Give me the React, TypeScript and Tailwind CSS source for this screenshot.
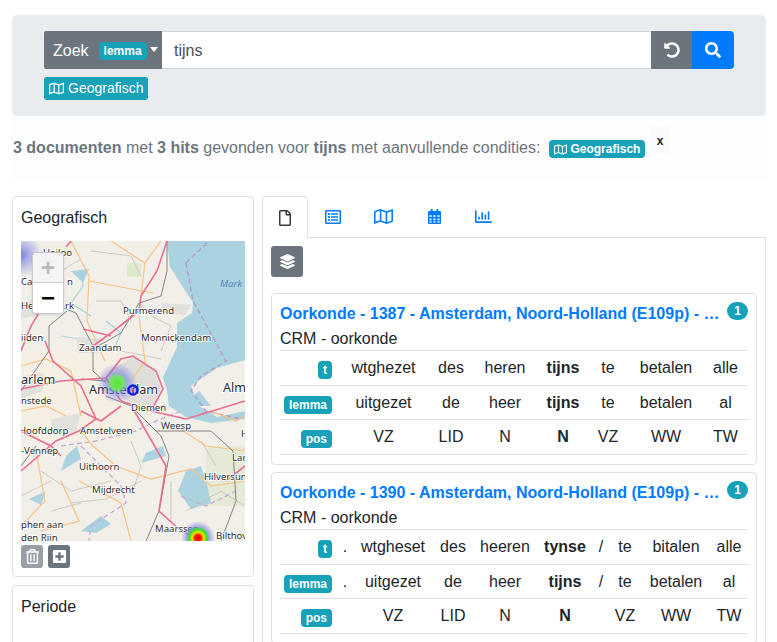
import React from 'react';
import {
  FaRegFile,
  FaRegListAlt,
  FaRegMap,
  FaRegChartBar,
  FaLayerGroup,
  FaUndoAlt,
  FaSearch,
  FaRegTrashAlt,
  FaPlusSquare,
} from 'react-icons/fa';

// =============================================================================
// KAART
// =============================================================================

const LABELS: [string, number, number][] = [
  ['Heiloo', 22, 15],
  ['Cas', 0, 44],
  ['n', 46, 44],
  ['Hee', 0, 68],
  ['rk', 44, 68],
  ['Purmerend', 102, 73],
  ['Monnickendam', 120, 100],
  ['iiden', 0, 100],
  ['Zaandam', 58, 110],
  ['nstede', 0, 163],
  ['Diemen', 110, 170],
  ['Hoofddorp', -2, 193],
  ['Amstelveen', 59, 193],
  ['Weesp', 140, 188],
  ['H', 220, 196],
  ['-Vennep', 0, 213],
  ['Lar', 211, 220],
  ['Uithoorn', 58, 229],
  ['Hilversum', 183, 239],
  ['Mijdrecht', 71, 252],
  ['phen aan', 0, 287],
  ['den Rijn', 0, 300],
  ['Maarssen', 134, 291],
  ['Bilthoven', 195, 298],
];

const PINK_ROADS = [
  'M146 0 L136 30 L120 55 L118 70 L90 92 L72 105',
  'M24 100 L32 120 L60 145 L75 178 L58 190 L35 200 L0 230',
  'M0 148 L40 140 L85 137 L100 118 L112 115 L135 130 L142 148 L130 170 L100 160 L85 137',
  'M130 170 L165 178 L224 160',
  'M112 168 L125 190 L145 225 L138 270 L160 290 L185 300',
  'M0 190 L30 205 L40 215',
  'M40 48 L24 62 L10 85 L0 110',
  'M205 240 L224 225',
  'M60 170 L80 180 L100 165',
  'M62 88 L90 95',
  'M50 0 L45 6',
];

const ORANGE_ROADS = [
  'M50 0 L68 35 L66 80 L84 120',
  'M90 0 L124 22 L118 70',
  'M124 22 L140 0',
  'M68 40 L100 46 L132 52',
  'M118 75 L124 120 L110 140',
  'M0 125 L25 118 L50 130 L60 175',
  'M60 190 L72 205 L95 225 L130 238 L170 228 L190 245 L224 240',
  'M15 210 L24 260 L0 285',
  'M40 240 L58 280 L20 290',
  'M58 240 L100 262 L110 300',
  'M190 170 L215 180 L224 175',
  'M155 185 L185 205 L224 210',
  'M0 170 L25 165 L45 175',
];

const GRAY_ROADS = [
  'M146 0 L146 30 L140 55 L118 62 L100 92 L72 108 L72 130 L85 142',
  'M30 62 L55 72 L72 105',
  'M0 150 L28 110 L28 85 L46 70',
  'M85 140 L60 138',
  'M85 155 L110 165 L140 195 L148 215 L138 270 L125 300',
  'M135 190 L190 190 L212 210 L215 260 L200 300',
  'M0 225 L15 205',
];

// dunne lijntjes voor het detail in het landschap
const MINOR_ROADS = [
  'M10 20 L40 30 L60 18',
  'M70 10 L110 15 L120 35',
  'M75 60 L100 60 L110 80',
  'M130 75 L150 85 L140 110',
  'M100 110 L140 118',
  'M20 230 L50 250 L90 240',
  'M50 262 L85 258 L120 240',
  'M110 200 L120 225 L112 250',
  'M150 240 L150 280',
  'M165 270 L200 250 L224 265',
  'M180 200 L195 225',
  'M0 255 L30 240',
  'M30 270 L60 262',
];

const LAKES = [
  'M40 230 L60 218 L56 205 L45 215 Z',
  'M120 222 L145 215 L142 205 L125 212 Z',
  'M157 250 L165 230 L180 225 L185 240 L190 262 L170 268 Z',
  'M8 258 L25 250 L20 264 Z',
  'M60 290 L80 275 L90 283 L75 292 Z',
  'M50 30 L68 28 L62 42 Z',
  'M160 165 L178 150 L190 165 Z',
];

function MapDrawing() {
  return (
    <svg viewBox="0 0 224 300" className="block w-full h-full">
      <defs>
        <radialGradient id="heat-mid">
          <stop offset="0%" stopColor="#4fe82a" />
          <stop offset="34%" stopColor="#6ee060" stopOpacity="0.9" />
          <stop offset="55%" stopColor="#6a78e8" stopOpacity="0.5" />
          <stop offset="100%" stopColor="#6a6ae8" stopOpacity="0" />
        </radialGradient>
        <radialGradient id="heat-hot">
          <stop offset="0%" stopColor="#f00000" />
          <stop offset="20%" stopColor="#ff2000" />
          <stop offset="34%" stopColor="#e8e800" />
          <stop offset="52%" stopColor="#30e030" />
          <stop offset="72%" stopColor="#8080e8" stopOpacity="0.55" />
          <stop offset="100%" stopColor="#8080e8" stopOpacity="0" />
        </radialGradient>
        <radialGradient id="heat-cold">
          <stop offset="0%" stopColor="#5060e0" stopOpacity="0.75" />
          <stop offset="100%" stopColor="#7070e0" stopOpacity="0" />
        </radialGradient>
      </defs>

      <rect width="224" height="300" fill="#f2efe9" />
      <rect x="0" y="110" width="110" height="90" fill="#f6efe4" />
      <rect x="185" y="205" width="39" height="60" fill="#e4ead6" />
      <rect x="106" y="22" width="14" height="14" fill="#dfe9cc" />

      <path
        d="M146 0 L224 0 L224 119 L196 127 L170 145 L178 165 L196 176 L224 170 L224 178 L190 182 L165 176 L148 165 L146 150 L142 136 L156 106 L156 82 L171 72 L172 62 L149 26 Z"
        fill="#aad3df"
      />
      {LAKES.map((d, i) => (
        <path key={i} d={d} fill="#aad3df" />
      ))}
      <path d="M60 30 L62 45 L50 62 L70 75 M85 80 L100 92 L92 110 M40 95 L70 100 M150 150 L170 150" fill="none" stroke="#aad3df" strokeWidth="1.2" />

      {/* bebouwing */}
      <path d="M88 130 L112 116 L134 130 L140 148 L130 168 L102 158 Z" fill="#e0ded9" />
      <path d="M0 135 L22 132 L22 150 L0 158 Z M30 178 L60 172 L54 193 L32 193 Z M0 62 L16 58 L18 74 L0 78 Z M140 62 L170 64 L164 74 L142 72 Z M55 96 L82 98 L78 112 L58 112 Z" fill="#e3e1dc" />

      {/* grenzen */}
      <path
        d="M165 22 L188 0 M165 22 L172 60 L205 120 L180 135 L170 150 L185 170 L220 178"
        fill="none"
        stroke="#b79ac8"
        strokeWidth="1.4"
        strokeDasharray="5 3"
      />
      <path
        d="M40 205 L75 200 L115 190 L135 180 L160 170 M60 205 L100 245 L105 262 L70 285 L68 300 M160 255 L185 265 L215 250"
        fill="none"
        stroke="#c8aed4"
        strokeWidth="1.4"
        strokeDasharray="5 3"
      />

      {MINOR_ROADS.map((d, i) => (
        <path key={i} d={d} fill="none" stroke="#bdbab4" strokeWidth="0.7" />
      ))}
      {ORANGE_ROADS.map((d, i) => (
        <path key={i} d={d} fill="none" stroke="#f8c384" strokeWidth="1.2" />
      ))}
      {GRAY_ROADS.map((d, i) => (
        <path key={i} d={d} fill="none" stroke="#777777" strokeWidth="0.9" />
      ))}
      {PINK_ROADS.map((d, i) => (
        <path key={i} d={d} fill="none" stroke="#e96e92" strokeWidth="1.6" />
      ))}

      <g fontFamily="'Noto Sans', 'Open Sans', sans-serif" fontSize="9.6" fill="#2c2c2c" stroke="#ffffff" strokeWidth="1.5" paintOrder="stroke">
        {LABELS.map(([text, x, y]) => (
          <text key={text} x={x} y={y}>
            {text}
          </text>
        ))}
        <text x="199" y="46" fontStyle="italic" fill="#5a85c0" strokeWidth="0">Mark</text>
      </g>
      <g fontFamily="'Noto Sans', 'Open Sans', sans-serif" fontSize="12.6" fill="#2c2c2c" stroke="#ffffff" strokeWidth="1.6" paintOrder="stroke">
        <text x="0" y="143">arlem</text>
        <text x="68" y="153">Amsterdam</text>
        <text x="202" y="151">Alm</text>
      </g>

      <circle cx="96" cy="142" r="20" fill="url(#heat-mid)" />
      <circle cx="0" cy="14" r="22" fill="url(#heat-cold)" />
      <circle cx="177" cy="297" r="17" fill="url(#heat-hot)" />
      <circle cx="112" cy="149" r="4.5" fill="#5050e8" fillOpacity="0.3" stroke="#1a1ae8" strokeWidth="2.5" />
    </svg>
  );
}

function CalendarIcon() {
  return (
    <svg viewBox="0 0 16 17" className="h-[16px] w-[15px]">
      <path d="M4 0 h2 v3 h-2 z M10 0 h2 v3 h-2 z" fill="currentColor" />
      <rect x="1" y="2" width="14" height="14" rx="1.5" fill="currentColor" />
      <g fill="#ffffff" fillOpacity="0.85">
        <rect x="2.5" y="6.5" width="2.5" height="2" />
        <rect x="6.7" y="6.5" width="2.5" height="2" />
        <rect x="11" y="6.5" width="2.5" height="2" />
        <rect x="2.5" y="10" width="2.5" height="2" />
        <rect x="6.7" y="10" width="2.5" height="2" />
        <rect x="11" y="10" width="2.5" height="2" />
        <rect x="2.5" y="13" width="2.5" height="1.6" />
        <rect x="6.7" y="13" width="2.5" height="1.6" />
        <rect x="11" y="13" width="2.5" height="1.6" />
      </g>
    </svg>
  );
}

// =============================================================================
// RESULTATEN
// =============================================================================

function Tag({ children }: { children: React.ReactNode }) {
  return (
    <span className="relative top-[2px] inline-block rounded-[4px] bg-[#17a2b8] px-[5px] pt-[4px] pb-[4px] text-[12px] leading-[10px] font-bold text-white align-middle">
      {children}
    </span>
  );
}

interface ResultRow {
  tag: string;
  cells: string[];
}

interface ResultProps {
  title: string;
  boldIndex: number;
  colWidths: string[];
  rows: ResultRow[];
}

function ResultCard({ title, boldIndex, colWidths, rows }: ResultProps) {
  return (
    <div className="rounded-[4px] border border-[#dfdfdf] bg-white px-2 pt-[8px] pb-[9px] mb-[7px]">
      <div className="flex items-start">
        <a className="flex-1 min-w-0 truncate text-[16px] leading-[24px] font-bold text-[#007bff] pr-[4px]">{title}</a>
        <span className="flex h-[18px] w-[21px] shrink-0 items-center justify-center rounded-full bg-[#17a2b8] text-[12px] font-bold text-white">
          1
        </span>
      </div>
      <div className="pt-[1px] text-[16px] leading-[23px] text-[#212529]">CRM - oorkonde</div>
      <table className="w-full table-fixed border-collapse text-[16px] text-[#212529]">
        <colgroup>
          <col className="w-[56px]" />
          {colWidths.map((w, i) => (
            <col key={i} style={{ width: w }} />
          ))}
        </colgroup>
        <tbody>
          {rows.map((row, r) => (
            <tr key={row.tag} className={`border-y border-[#dee2e6] ${r === 1 ? 'h-[34px]' : 'h-[35px]'}`}>
              <td className="pr-1 text-right whitespace-nowrap leading-none">
                <Tag>{row.tag}</Tag>
              </td>
              {row.cells.map((c, i) => (
                <td key={i} className={`text-center p-0 whitespace-nowrap ${i === boldIndex ? 'font-bold' : ''}`}>
                  {c}
                </td>
              ))}
            </tr>
          ))}
        </tbody>
      </table>
    </div>
  );
}

// =============================================================================
// PAGINA
// =============================================================================

export default function App() {
  return (
    <div className="h-[642px] w-[777px] overflow-hidden bg-white font-['Liberation_Sans',Arial,sans-serif] text-[16px] text-[#212529]">
      <div className="px-3 pt-[15px]">
        {/* Zoekbalk */}
        <div className="h-[101px] w-[754px] rounded-[5px] bg-[#e9ecef] px-8 pt-4">
          <div className="flex h-[38px]">
            <div className="flex w-[118px] items-center bg-[#6c757d] pl-[9px] pt-[2px] text-white rounded-l-[2px]">
              <span>Zoek</span>
              <span className="ml-[10px] rounded-[4px] bg-[#17a2b8] px-[5px] py-[3px] text-[12px] leading-[12px] font-bold">
                lemma
              </span>
              <span className="ml-[3px] mb-[3px] h-0 w-0 border-x-[4px] border-t-[5px] border-x-transparent border-t-white" />
            </div>
            <div className="flex flex-1 items-center border-y border-[#ced4da] bg-white pl-3 pt-[2px] text-[#495057]">tijns</div>
            <button className="flex w-[41px] items-center justify-center bg-[#6c757d] text-white">
              <FaUndoAlt size={16} />
            </button>
            <button className="flex w-[42px] items-center justify-center rounded-r-[4px] bg-[#007bff] text-white">
              <FaSearch size={16} />
            </button>
          </div>
          <div className="mt-2 flex">
            <span className="flex h-[23px] items-center gap-[4px] rounded-[3px] bg-[#17a2b8] px-[5px] text-[14px] text-white">
              <FaRegMap size={15} />
              Geografisch
            </span>
          </div>
        </div>

        {/* Samenvatting */}
        <div className="relative h-[64px] w-[754px] bg-[#fdfdfd] pt-[24px] pl-[1px] text-[#6c757d]">
          <div className="flex h-[18px] items-center">
            <span className="relative -top-[1px]">
              <b>3 documenten</b> met <b>3 hits</b> gevonden voor <b>tijns</b> met aanvullende condities:
            </span>
            <span className="ml-[9px] flex h-[18px] items-center gap-[3px] rounded-[4px] bg-[#17a2b8] px-[5px] text-[12px] font-bold text-white">
              <FaRegMap size={13} />
              Geografisch
            </span>
          </div>
          <span className="absolute left-[639px] top-[11px] flex h-[26px] w-[18px] items-start justify-center bg-[#f8f9fa] pt-[7px] text-[12px] font-bold leading-[14px] text-[#212529]">
            x
          </span>
        </div>

        <div className="mt-4 flex gap-2">
          {/* Linkerkolom */}
          <div className="w-[242px] shrink-0">
            <div className="h-[381px] rounded-[4px] border border-[#dfdfdf] bg-white px-2 pt-[9px]">
              <div className="h-[35px] text-[16px] leading-[24px]">Geografisch</div>
              <div className="relative h-[300px] w-[224px] overflow-hidden">
                <MapDrawing />
                <div className="absolute left-[11px] top-[11px] w-[32px] overflow-hidden rounded-[4px] border border-[#c8c8c8] shadow-sm">
                  <div className="flex h-[30px] items-center justify-center border-b border-[#ccc] bg-[#f4f4f4] text-[24px] font-bold text-[#bbb]">+</div>
                  <div className="flex h-[30px] items-center justify-center bg-white text-[24px] font-bold text-black">−</div>
                </div>
              </div>
              <div className="mt-[4px] flex gap-[5px]">
                <span className="flex h-[23px] w-[22px] items-center justify-center rounded-[3px] bg-[#9a9fa5] text-white">
                  <FaRegTrashAlt size={15} />
                </span>
                <span className="flex h-[23px] w-[22px] items-center justify-center rounded-[3px] bg-[#6c757d] text-white">
                  <FaPlusSquare size={15} />
                </span>
              </div>
            </div>
            <div className="mt-2 h-[80px] rounded-[4px] border border-[#dfdfdf] bg-white px-2 pt-[9px] leading-[24px]">Periode</div>
          </div>

          {/* Rechterkolom */}
          <div className="w-[504px]">
            <div className="flex h-[42px] text-[#007bff]">
              <div className="z-10 flex h-[42px] w-[46px] items-center justify-center rounded-t-[4px] border border-b-0 border-[#dee2e6] bg-white text-[#343a40]">
                <FaRegFile size={16} />
              </div>
              <div className="flex h-[41px] w-[50px] items-center justify-center"><FaRegListAlt size={16} /></div>
              <div className="flex h-[41px] w-[51px] items-center justify-center"><FaRegMap size={19} /></div>
              <div className="flex h-[41px] w-[50px] items-center justify-center"><CalendarIcon /></div>
              <div className="flex h-[41px] w-[49px] items-center justify-center"><FaRegChartBar size={17} /></div>
            </div>
            <div className="-mt-px border border-[#dee2e6] px-2 pt-2">
              <button className="flex h-[31px] w-[32px] items-center justify-center rounded-[3px] bg-[#6c757d] text-white">
                <FaLayerGroup size={15} />
              </button>
              <div className="mt-4">
                <ResultCard
                  title="Oorkonde - 1387 - Amsterdam, Noord-Holland (E109p) - 1e kwartaal"
                  boldIndex={3}
                  colWidths={['95px', '40px', '68px', '48px', '42px', '74px', '45px']}
                  rows={[
                    { tag: 't', cells: ['wtghezet', 'des', 'heren', 'tijns', 'te', 'betalen', 'alle'] },
                    { tag: 'lemma', cells: ['uitgezet', 'de', 'heer', 'tijns', 'te', 'betalen', 'al'] },
                    { tag: 'pos', cells: ['VZ', 'LID', 'N', 'N', 'VZ', 'WW', 'TW'] },
                  ]}
                />
                <ResultCard
                  title="Oorkonde - 1390 - Amsterdam, Noord-Holland (E109p) - 1e kwartaal"
                  boldIndex={4}
                  colWidths={['18px', '78px', '42px', '62px', '58px', '14px', '34px', '68px', '38px']}
                  rows={[
                    { tag: 't', cells: ['.', 'wtgheset', 'des', 'heeren', 'tynse', '/', 'te', 'bitalen', 'alle'] },
                    { tag: 'lemma', cells: ['.', 'uitgezet', 'de', 'heer', 'tijns', '/', 'te', 'betalen', 'al'] },
                    { tag: 'pos', cells: ['', 'VZ', 'LID', 'N', 'N', '', 'VZ', 'WW', 'TW'] },
                  ]}
                />
              </div>
            </div>
          </div>
        </div>
      </div>
    </div>
  );
}
